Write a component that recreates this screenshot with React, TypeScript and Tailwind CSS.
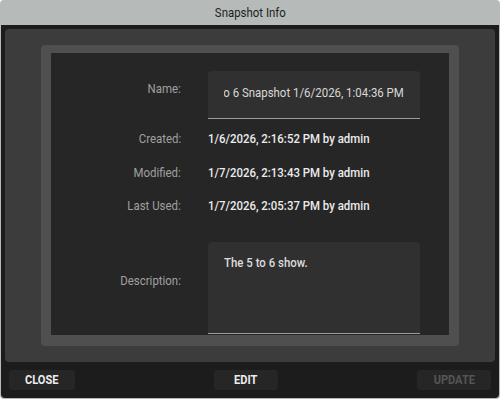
const FONT = "font-['Roboto','Liberation_Sans',sans-serif]";

// the UI uses a condensed face; squeeze Roboto to match
function Narrow({
  children,
  origin = "origin-left",
  squeeze = "scale-x-[0.88]",
}: {
  children: React.ReactNode;
  origin?: string;
  squeeze?: string;
}) {
  return (
    <span className={`inline-block whitespace-nowrap ${squeeze} ${origin}`}>
      {children}
    </span>
  );
}

const rows = [
  { label: "Created:", value: "1/6/2026, 2:16:52 PM by admin" },
  { label: "Modified:", value: "1/7/2026, 2:13:43 PM by admin" },
  { label: "Last Used:", value: "1/7/2026, 2:05:37 PM by admin" },
];

export default function App() {
  return (
    <div
      className={`${FONT} w-[500px] h-[399px] bg-[#b6bbba] flex flex-col rounded-[4px] overflow-hidden`}
    >
      <div className="h-[25px] pt-[1px] flex items-center justify-center text-[13px] text-[#1e1e1e]">
        <Narrow origin="origin-center">Snapshot Info</Narrow>
      </div>

      <div className="flex-1 mx-[1px] mb-[1px] bg-[#1c1c1c] rounded-b-[4px] flex flex-col px-[4px] pt-[4px]">
        {/* main panel */}
        <div className="h-[333px] bg-[#3c3c3c] rounded-[4px] px-[36px] py-[16px]">
          <div className="h-full bg-[#4f4f4f] rounded-[4px] pl-[10px] pr-[10px] pt-[8px] pb-[11px]">
            <div className="h-full bg-[#262626] overflow-hidden flex flex-col pt-[18px]">
              {/* name */}
              <div className="flex">
                <div className="w-[130px] pt-[8px] text-right text-[13px] text-[#a0a0a0]">
                  <Narrow origin="origin-right">Name:</Narrow>
                </div>
                <div className="ml-[27px] w-[212px] h-[48px] bg-[#303030] rounded-t-[4px] border-b border-[#9c9c9c] px-[16px] flex items-center">
                  <div className="w-full overflow-hidden flex justify-end text-[13px] text-[#d8d8d8] -mt-[4px]">
                    <Narrow origin="origin-right">
                      5 to 6 Snapshot 1/6/2026, 1:04:36 PM
                    </Narrow>
                  </div>
                </div>
              </div>

              <div className="pt-[3px]">
                {rows.map((r) => (
                  <div key={r.label} className="flex items-center h-[33.6px]">
                    <div className="w-[130px] text-right text-[13px] text-[#a0a0a0]">
                      <Narrow origin="origin-right">{r.label}</Narrow>
                    </div>
                    <div className="ml-[27px] text-[13px] font-medium text-[#ebebeb]">
                      <Narrow>{r.value}</Narrow>
                    </div>
                  </div>
                ))}
              </div>

              {/* description */}
              <div className="flex mt-[19px]">
                <div className="w-[130px] pt-[29px] text-right text-[13px] text-[#a0a0a0]">
                  <Narrow origin="origin-right">Description:</Narrow>
                </div>
                <div className="ml-[27px] w-[212px] h-[92px] bg-[#303030] rounded-t-[4px] border-b border-[#9c9c9c] px-[16px] pt-[11px] text-[13px] font-medium text-[#dcdcdc]">
                  <Narrow>The 5 to 6 show.</Narrow>
                </div>
              </div>
            </div>
          </div>
        </div>

        {/* buttons */}
        <div className="flex items-center justify-between mt-[8px] px-[4px]">
          <button className="w-[66px] h-[20px] bg-[#262626] rounded-[3px] text-[13px] font-bold text-[#ececec] flex items-center justify-center">
            <Narrow origin="origin-center" squeeze="scale-x-[0.85]">CLOSE</Narrow>
          </button>
          <button className="w-[64px] h-[20px] bg-[#262626] rounded-[3px] text-[13px] font-bold text-[#ececec] flex items-center justify-center">
            <Narrow origin="origin-center" squeeze="scale-x-[0.85]">EDIT</Narrow>
          </button>
          <button className="w-[74px] h-[20px] bg-[#262626] rounded-[3px] text-[13px] font-bold text-[#555555] flex items-center justify-center">
            <Narrow origin="origin-center" squeeze="scale-x-[0.85]">UPDATE</Narrow>
          </button>
        </div>
      </div>
    </div>
  );
}
